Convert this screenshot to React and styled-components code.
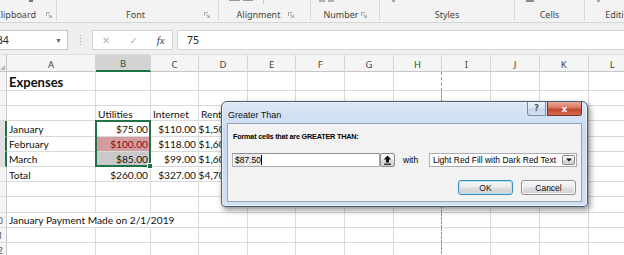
import React from 'react';
import styled, { createGlobalStyle } from 'styled-components';

const GlobalStyle = createGlobalStyle`
  html, body { margin: 0; padding: 0; background: #fff; overflow: hidden; }
  #root { width: 624px; height: 255px; }
`;

const Page = styled.div`
  width: 624px;
  height: 255px;
  position: relative;
  overflow: hidden;
  display: flex;
  flex-direction: column;
  background: #fff;
`;

/* ---------- Ribbon ---------- */
const Ribbon = styled.div`
  height: 23px;
  flex: none;
  display: flex;
  box-sizing: border-box;
  background: #f3f3f3;
  border-bottom: 1px solid #d5d5d5;
  font-family: "Noto Sans", "Open Sans", sans-serif;
  font-size: 9px;
  color: #444;
`;

const Group = styled.div`
  flex: none;
  width: ${p => p.$w}px;
  margin-left: ${p => p.$ml || 0}px;
  margin-bottom: 2px;
  box-sizing: border-box;
  border-right: ${p => (p.$last ? 'none' : '1px solid #d6d6d6')};
  display: flex;
  flex-direction: column;
  justify-content: space-between;
`;

const StubRow = styled.div`
  height: 4px;
  display: flex;
  align-items: flex-start;
`;

const Stub = styled.div`
  flex: none;
  margin-left: ${p => p.$x}px;
  width: ${p => p.$w}px;
  height: ${p => p.$h || 2}px;
  background: ${p => p.$c || '#9a9a9a'};
`;

const LabelRow = styled.div`
  display: grid;
  grid-template-columns: 1fr auto 1fr;
  align-items: end;
  padding-right: ${p => p.$pr || 0}px;
  height: 16px;
`;

const GroupLabel = styled.span`
  grid-column: 2;
  line-height: 11px;
  white-space: nowrap;
`;

const Launcher = styled.svg`
  grid-column: 3;
  justify-self: end;
  align-self: end;
  margin: 0 4px 2px 0;
  width: 6px;
  height: 6px;
`;

const LauncherIcon = () => (
  <Launcher viewBox="0 0 6 6">
    <path d="M0.5 4V0.5H4" fill="none" stroke="#a0a0a0" strokeWidth="0.9" />
    <path d="M2 2L5.3 5.3M5.3 2.8V5.3H2.8" fill="none" stroke="#a0a0a0" strokeWidth="0.9" />
  </Launcher>
);

/* ---------- Formula bar ---------- */
const FormulaBar = styled.div`
  height: 32px;
  flex: none;
  box-sizing: border-box;
  background: #efefef;
  border-bottom: 1px solid #dedede;
  display: flex;
  align-items: flex-start;
  padding-top: 7px;
  font-family: "Noto Sans", "Open Sans", sans-serif;
  font-size: 10.5px;
  color: #222;
`;

const NameBox = styled.div`
  flex: none;
  margin-left: -8px;
  width: 76px;
  height: 20px;
  box-sizing: border-box;
  background: #fff;
  border: 1px solid #c8c8c8;
  display: flex;
  align-items: center;
  justify-content: space-between;
  padding: 0 5px 0 3px;
`;

const Caret = styled.span`
  font-size: 7px;
  color: #666;
`;

const Dots = styled.div`
  flex: none;
  width: 24px;
  height: 20px;
  display: flex;
  flex-direction: column;
  align-items: center;
  justify-content: center;
  gap: 2px;
`;

const Dot = styled.div`
  width: 1px;
  height: 1px;
  background: #a8a8a8;
`;

const FxBox = styled.div`
  flex: none;
  width: 81px;
  height: 20px;
  box-sizing: border-box;
  background: #fff;
  border: 1px solid #d4d4d4;
  display: flex;
  align-items: center;
  padding-left: 9px;
  gap: 19px;
`;

const FxGlyph = styled.span`
  font-family: ${p => (p.$serif ? '"Liberation Serif", serif' : '"DejaVu Sans", sans-serif')};
  font-style: ${p => (p.$serif ? 'italic' : 'normal')};
  font-size: ${p => (p.$serif ? '11px' : '10px')};
  color: ${p => p.$color};
`;

const FormulaInput = styled.div`
  flex: 1;
  margin-left: 4px;
  height: 20px;
  box-sizing: border-box;
  background: #fff;
  border: 1px solid #d4d4d4;
  border-right: none;
  display: flex;
  align-items: center;
  padding-left: 9px;
`;

/* ---------- Sheet ---------- */
const Sheet = styled.div`
  flex: none;
  display: grid;
  grid-template-columns: 7px 89px 55px 48px repeat(9, 48.7px);
  grid-template-rows: 17px 19px repeat(11, 15.2px);
  font-family: Lato, "Noto Sans", sans-serif;
  font-size: 10.2px;
  color: #111;
`;

const Corner = styled.div`
  grid-row: 1;
  grid-column: 1;
  box-sizing: border-box;
  background: #f3f3f3;
  border-right: 1px solid #c6c6c6;
  border-bottom: 1px solid #c6c6c6;
  display: flex;
  align-items: flex-end;
  justify-content: flex-end;
  padding: 0 1px 1px 0;
`;

const ColHead = styled.div`
  grid-row: 1;
  grid-column: ${p => p.$c};
  box-sizing: border-box;
  background: ${p => (p.$sel ? '#d3d3d3' : '#f5f5f5')};
  border-right: 1px solid #d6d6d6;
  border-bottom: ${p => (p.$sel ? '2px solid #217346' : '1px solid #c6c6c6')};
  display: flex;
  align-items: center;
  justify-content: center;
  font-family: "Noto Sans", "Open Sans", sans-serif;
  font-size: 9.5px;
  color: ${p => (p.$sel ? '#26593c' : '#444')};
  padding-top: 2px;
`;

const RowHead = styled.div`
  grid-row: ${p => p.$r};
  grid-column: 1;
  box-sizing: border-box;
  background: ${p => (p.$sel ? '#e1e1e1' : '#f5f5f5')};
  border-bottom: 1px solid #dadada;
  border-right: ${p => (p.$sel ? '2px solid #217346' : '1px solid #c6c6c6')};
  overflow: hidden;
  display: flex;
  align-items: center;
  justify-content: flex-end;
  padding-top: 1px;
  font-family: "Noto Sans", "Open Sans", sans-serif;
  font-size: 9.5px;
  color: #555;
`;

const RowNum = styled.span`
  flex: none;
  width: 19px;
  margin-right: -1px;
  text-align: center;
`;

const Cell = styled.div`
  grid-row: ${p => p.$r};
  grid-column: ${p => p.$c};
  box-sizing: border-box;
  min-width: 0;
  border-bottom: 1px solid #dadada;
  border-right: ${p =>
    p.$edge === 'dash' ? '1px dashed #8f8f8f' : p.$edge === 'none' ? '1px solid transparent' : '1px solid #dadada'};
  background: ${p => p.$fill || 'transparent'};
  color: ${p => p.$color || '#111'};
  font-weight: ${p => (p.$bold ? 700 : 400)};
  font-size: ${p => (p.$bold ? '13px' : '10.2px')};
  display: flex;
  align-items: center;
  justify-content: ${p => (p.$right ? 'flex-end' : 'flex-start')};
  padding: ${p => (p.$right ? '1px 2px 0 0' : '1px 0 0 2px')};
  white-space: nowrap;
`;

const Selection = styled.div`
  grid-row: 5 / 8;
  grid-column: 3;
  margin: -1px 0 0 -1px;
  border: 2px solid #217346;
  position: relative;
  pointer-events: none;
  z-index: 2;
`;

const FillHandle = styled.div`
  position: absolute;
  right: -4px;
  bottom: -4px;
  width: 4px;
  height: 4px;
  background: #217346;
  border: 1px solid #fff;
`;

/* ---------- Dialog ---------- */
const Dialog = styled.div`
  position: absolute;
  left: 221px;
  top: 101px;
  width: 367px;
  height: 106px;
  box-sizing: border-box;
  border: 1px solid #4d5c70;
  border-radius: 6px 6px 4px 4px;
  background: linear-gradient(180deg, #dbe7f6 0%, #c9daf0 30%, #d2e0f2 100%);
  box-shadow: 2px 3px 6px rgba(0, 0, 0, 0.45), inset 0 0 0 1px rgba(255, 255, 255, 0.55);
  display: flex;
  flex-direction: column;
  padding: 0 5px 4px 5px;
  font-family: "Liberation Sans", Arial, sans-serif;
  color: #000;
  z-index: 5;
`;

const TitleBar = styled.div`
  height: 21px;
  flex: none;
  display: flex;
  align-items: flex-start;
`;

const Title = styled.div`
  flex: 1;
  font-size: 9px;
  line-height: 12px;
  padding: 7px 0 0 1px;
  color: #111;
`;

const CaptionBtn = styled.div`
  flex: none;
  width: ${p => p.$w}px;
  height: 14px;
  box-sizing: border-box;
  margin-left: ${p => p.$ml || 0}px;
  border: 1px solid ${p => (p.$close ? '#7a3326' : '#7c8ca3')};
  border-top: none;
  border-radius: ${p => (p.$close ? '0 0 3px 0' : '0 0 0 3px')};
  background: ${p =>
    p.$close
      ? 'linear-gradient(180deg, #e9a99a 0%, #d8765f 45%, #c4452c 55%, #d36a51 100%)'
      : 'linear-gradient(180deg, #eef3fa 0%, #dbe5f3 45%, #c8d6ea 55%, #d5e1f1 100%)'};
  display: flex;
  align-items: center;
  justify-content: center;
  font-size: ${p => (p.$close ? '9px' : '8px')};
  font-weight: 700;
  color: ${p => (p.$close ? '#fff' : '#3d4f69')};
  font-family: "DejaVu Sans", sans-serif;
`;

const Client = styled.div`
  flex: 1;
  box-sizing: border-box;
  background: #f2f2f2;
  border: 1px solid #95a5ba;
  padding: 7px 4px 0 4px;
  display: flex;
  flex-direction: column;
`;

const Prompt = styled.div`
  font-size: 7.3px;
  font-weight: 700;
  letter-spacing: -0.22px;
  line-height: 12px;
  margin-left: 1px;
  white-space: nowrap;
`;

const InputRow = styled.div`
  margin-top: 10px;
  height: 14px;
  display: flex;
  align-items: stretch;
`;

const TextInput = styled.div`
  flex: none;
  width: 148px;
  box-sizing: border-box;
  background: #fff;
  border: 1px solid #abadb3;
  border-top-color: #8e9096;
  display: flex;
  align-items: center;
  padding-left: 1px;
  font-size: 8.5px;
`;

const Selected = styled.span`
  background: #ebebeb;
  padding: 1px 0 1px 1px;
`;

const TextCaret = styled.span`
  width: 1px;
  height: 10px;
  background: #000;
`;

const SmallBtn = styled.div`
  flex: none;
  width: ${p => p.$w}px;
  box-sizing: border-box;
  border: 1px solid #8a8a8a;
  border-radius: 2px;
  background: linear-gradient(180deg, #fafafa 0%, #ececec 50%, #dcdcdc 51%, #d0d0d0 100%);
  display: flex;
  align-items: center;
  justify-content: center;
`;

const WithLabel = styled.div`
  flex: none;
  width: 26px;
  margin-left: 8px;
  display: flex;
  align-items: center;
  font-size: 8.5px;
`;

const SelectBox = styled.div`
  flex: none;
  width: 148px;
  box-sizing: border-box;
  background: #fff;
  border: 1px solid #abadb3;
  display: flex;
  align-items: stretch;
  padding: 1px;
`;

const SelectText = styled.div`
  flex: 1;
  display: flex;
  align-items: center;
  padding-left: 2px;
  font-size: 8.5px;
  white-space: nowrap;
`;

const ButtonRow = styled.div`
  margin-top: 13px;
  display: flex;
  justify-content: flex-end;
  gap: 8px;
  padding-right: 1px;
`;

const Button = styled.div`
  width: 55px;
  height: 15px;
  box-sizing: border-box;
  border: 1px solid ${p => (p.$focus ? '#3c8fc0' : '#8f8f8f')};
  border-radius: 3px;
  background: linear-gradient(180deg, #f6f6f6 0%, #ececec 48%, #dedede 52%, #d2d2d2 100%);
  box-shadow: ${p => (p.$focus ? 'inset 0 0 0 1px #b6e1f7' : 'inset 0 0 0 1px #fbfbfb')};
  display: flex;
  align-items: center;
  justify-content: center;
  font-size: 8.5px;
  color: #111;
`;

const cellData = {
  1: { 2: { t: 'Expenses', bold: true } },
  3: { 3: { t: 'Utilities' }, 4: { t: 'Internet' }, 5: { t: 'Rent' } },
  4: { 2: { t: 'January' }, 3: { t: '$75.00', r: 1 }, 4: { t: '$110.00', r: 1 }, 5: { t: '$1,500.00', r: 1 } },
  5: {
    2: { t: 'February' },
    3: { t: '$100.00', r: 1, fill: '#d39ca1', color: '#8e0d17' },
    4: { t: '$118.00', r: 1 },
    5: { t: '$1,600.00', r: 1 },
  },
  6: { 2: { t: 'March' }, 3: { t: '$85.00', r: 1, fill: '#c9c9c9' }, 4: { t: '$99.00', r: 1 }, 5: { t: '$1,600.00', r: 1 } },
  7: { 2: { t: 'Total' }, 3: { t: '$260.00', r: 1 }, 4: { t: '$327.00', r: 1 }, 5: { t: '$4,700.00', r: 1 } },
  10: { 2: { t: 'January Payment Made on 2/1/2019' } },
};

const LETTERS = ['A', 'B', 'C', 'D', 'E', 'F', 'G', 'H', 'I', 'J', 'K', 'L'];

function SheetGrid() {
  const items = [];
  items.push(
    <Corner key="corner">
      <svg width="5" height="5" viewBox="0 0 5 5">
        <path d="M5 0V5H0Z" fill="#b8b8b8" />
      </svg>
    </Corner>
  );
  LETTERS.forEach((l, i) => {
    items.push(
      <ColHead key={'h' + l} $c={i + 2} $sel={l === 'B'}>
        {l}
      </ColHead>
    );
  });
  for (let r = 1; r <= 12; r++) {
    const gr = r + 1;
    items.push(
      <RowHead key={'r' + r} $r={gr} $sel={r >= 4 && r <= 6}>
        <RowNum>{r}</RowNum>
      </RowHead>
    );
    for (let c = 2; c <= 13; c++) {
      const d = (cellData[r] && cellData[r][c]) || null;
      let edge = 'solid';
      if (c === 9) edge = 'dash';
      if (r === 10 && (c === 2 || c === 3)) edge = 'none';
      items.push(
        <Cell
          key={r + '-' + c}
          $r={gr}
          $c={c}
          $edge={edge}
          $right={d && d.r}
          $bold={d && d.bold}
          $fill={d && d.fill}
          $color={d && d.color}
        >
          {d ? d.t : null}
        </Cell>
      );
    }
  }
  items.push(
    <Selection key="sel">
      <FillHandle />
    </Selection>
  );
  return <Sheet>{items}</Sheet>;
}

export default function App() {
  return (
    <Page>
      <GlobalStyle />
      <Ribbon>
        <Group $w={82} $ml={-25}>
          <StubRow>
            <Stub $x={54} $w={4} $h={2} $c="#777" />
          </StubRow>
          <LabelRow>
            <GroupLabel>Clipboard</GroupLabel>
            <LauncherIcon />
          </LabelRow>
        </Group>
        <Group $w={162}>
          <StubRow />
          <LabelRow $pr={4}>
            <GroupLabel>Font</GroupLabel>
            <LauncherIcon />
          </LabelRow>
        </Group>
        <Group $w={92}>
          <StubRow>
            <Stub $x={10} $w={11} $h={1} />
            <Stub $x={3} $w={10} $h={1} />
            <Stub $x={10} $w={1} $h={4} $c="#c8c8c8" />
          </StubRow>
          <LabelRow $pr={12}>
            <GroupLabel>Alignment</GroupLabel>
            <LauncherIcon />
          </LabelRow>
        </Group>
        <Group $w={69}>
          <StubRow>
            <Stub $x={8} $w={6} $h={2} $c="#b0b0b0" />
            <Stub $x={3} $w={6} $h={2} $c="#b0b0b0" />
          </StubRow>
          <LabelRow $pr={8}>
            <GroupLabel>Number</GroupLabel>
            <LauncherIcon />
          </LabelRow>
        </Group>
        <Group $w={135}>
          <StubRow>
            <Stub $x={12} $w={3} $h={2} $c="#a8a8a8" />
          </StubRow>
          <LabelRow>
            <GroupLabel>Styles</GroupLabel>
          </LabelRow>
        </Group>
        <Group $w={70}>
          <StubRow>
            <Stub $x={11} $w={8} $h={2} $c="#8a8a8a" />
          </StubRow>
          <LabelRow>
            <GroupLabel>Cells</GroupLabel>
          </LabelRow>
        </Group>
        <Group $w={70} $last>
          <StubRow>
            <Stub $x={12} $w={3} $h={2} $c="#a8a8a8" />
          </StubRow>
          <LabelRow>
            <GroupLabel>Editing</GroupLabel>
          </LabelRow>
        </Group>
      </Ribbon>

      <FormulaBar>
        <NameBox>
          <span>B4</span>
          <Caret>▼</Caret>
        </NameBox>
        <Dots>
          <Dot />
          <Dot />
          <Dot />
          <Dot />
        </Dots>
        <FxBox>
          <FxGlyph $color="#b3b3b3">✕</FxGlyph>
          <FxGlyph $color="#b3b3b3">✓</FxGlyph>
          <FxGlyph $serif $color="#444">fx</FxGlyph>
        </FxBox>
        <FormulaInput>75</FormulaInput>
      </FormulaBar>

      <SheetGrid />

      <Dialog>
        <TitleBar>
          <Title>Greater Than</Title>
          <CaptionBtn $w={19}>?</CaptionBtn>
          <CaptionBtn $w={35} $ml={1} $close>
            x
          </CaptionBtn>
        </TitleBar>
        <Client>
          <Prompt>Format cells that are GREATER THAN:</Prompt>
          <InputRow>
            <TextInput>
              <Selected>$87.50</Selected>
              <TextCaret />
            </TextInput>
            <SmallBtn $w={15}>
              <svg width="9" height="10" viewBox="0 0 9 10">
                <path d="M4.5 0.5L8.3 4.6H6V7.6H3V4.6H0.7Z" fill="#111" />
                <rect x="1" y="8.6" width="7" height="1.2" fill="#111" />
              </svg>
            </SmallBtn>
            <WithLabel>with</WithLabel>
            <SelectBox>
              <SelectText>Light Red Fill with Dark Red Text</SelectText>
              <SmallBtn $w={13}>
                <svg width="6" height="4" viewBox="0 0 6 4">
                  <path d="M0 0.5H6L3 3.6Z" fill="#111" />
                </svg>
              </SmallBtn>
            </SelectBox>
          </InputRow>
          <ButtonRow>
            <Button $focus>OK</Button>
            <Button>Cancel</Button>
          </ButtonRow>
        </Client>
      </Dialog>
    </Page>
  );
}
